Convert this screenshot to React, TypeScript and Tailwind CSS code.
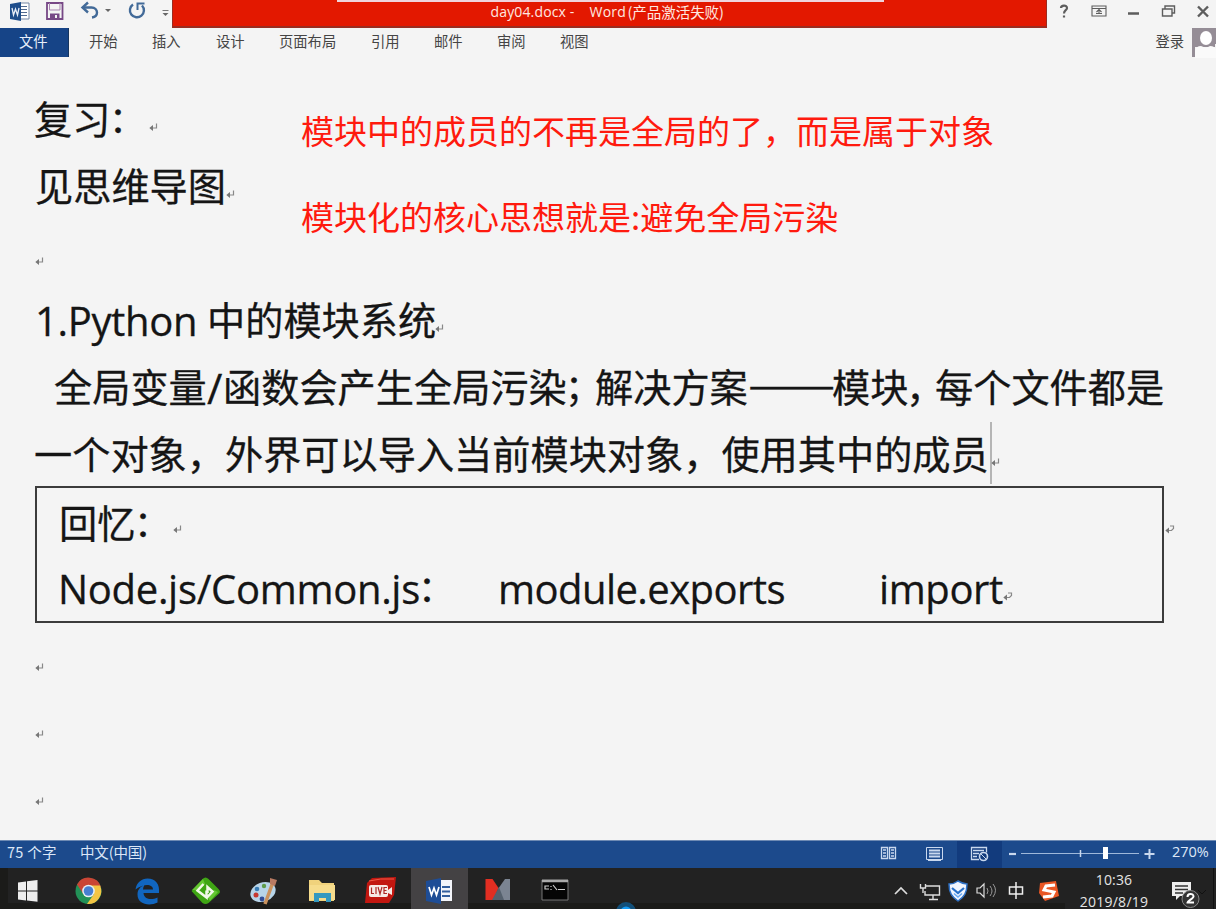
import React from "react";

const CJK = "font-['Open_Sans','Noto_Sans_CJK_SC',sans-serif]";
const UI = "font-['Noto_Sans_CJK_SC',sans-serif]";

function Seg({ w, className = "", children }: { w: string; className?: string; children?: React.ReactNode }) {
  return <span className={`block shrink-0 whitespace-pre ${w} ${className}`}>{children}</span>;
}

function Mark({ className = "" }: { className?: string }) {
  return (
    <svg className={`h-[9px] w-[9px] shrink-0 ${className}`} viewBox="0 0 9 9" fill="none" stroke="#888" strokeWidth="1.200">
      <path d="M7.500 .5v4.500H2" />
      <path d="M.3 5 4 2v6z" fill="#777" stroke="none" />
    </svg>
  );
}

function CellMark({ className = "" }: { className?: string }) {
  return (
    <svg className={`h-[9px] w-[10px] shrink-0 ${className}`} viewBox="0 0 10 9" fill="none" stroke="#888" strokeWidth="1.200">
      <path d="M5 1h3.500v2.500L6.500 5.500H3" />
      <path d="M.3 5.500 4 2.500v6z" fill="#777" stroke="none" />
    </svg>
  );
}

function Line({ className = "", children }: { className?: string; children?: React.ReactNode }) {
  return (
    <div className={`flex h-[67px] shrink-0 items-center text-[38.2px] leading-[67px] text-[#151515] [-webkit-text-stroke:0.3px_#151515] ${className}`}>{children}</div>
  );
}

function TitleBar() {
  return (
    <div className="flex h-[28px] shrink-0">
      <div className="flex w-[172px] shrink-0 items-start">
        <svg className="h-[28px] w-[172px]" viewBox="0 0 172 28" fill="none">
          <path d="M20 3h9v16h-9" fill="#fff" stroke="#7487a5" />
          <path d="M21 6.500h6M21 9.500h6M21 12.500h6M21 15.500h6" stroke="#50698f" />
          <path d="m10 4 11-2v19l-11-2z" fill="#1e4d8b" />
          <path d="m12 8 1.500 7 2-6 2 6 1.500-7" stroke="#e8eef8" strokeWidth="1.300" />
          <path d="M47 3h15.500v16H47z" stroke="#774886" strokeWidth="1.800" />
          <path d="M49.500 3v7h10.500V3" stroke="#a885b1" />
          <path d="M50 19v-5.500h9.500V19" fill="#774886" />
          <path d="M55 15h2v3h-2z" fill="#f4f4f4" />
          <path d="M83 7.500h8.500c3.500 0 5.500 2.500 5.500 5s-2 4.500-5 5" stroke="#426a98" strokeWidth="2.400" />
          <path d="m88 2.500-5.500 5 5.500 5" stroke="#426a98" strokeWidth="2.400" />
          <path d="M105 9h6l-3 3z" fill="#666" />
          <path d="M133 4.500A7 7 0 1 0 142 5.500" stroke="#426a98" strokeWidth="2.400" />
          <path d="M144.500 3.500H137.500v6.500" stroke="#426a98" strokeWidth="2" />
          <path d="M162.500 10.500h6" stroke="#777" />
          <path d="M162.500 13h6l-3 3z" fill="#666" />
        </svg>
      </div>
      <div className="relative flex w-[875px] shrink-0 justify-center border-x border-b-2 border-[#9b2c20] bg-[#e31800]">
        <div className="absolute left-[164px] top-0 h-[2px] w-[547px] bg-[#efd4dc]" />
        <div className="w-[872px] pl-[317px] leading-[24px] text-[#ffe8e0]">
          <div className="flex whitespace-pre">
            <Seg w="w-[99px]" className="font-['Open_Sans'] text-[14px] tracking-[0.150px]">day04.docx -</Seg>
            <Seg w="w-[39px]" className="font-['Open_Sans'] text-[14px] tracking-[0.200px]">Word</Seg>
            <Seg w="w-[100px]" className="-ml-px text-[14.500px] tracking-[-0.050px]">(产品激活失败)</Seg>
          </div>
        </div>
      </div>
      <svg className="h-[28px] w-[169px] shrink-0" viewBox="1047 0 169 28" fill="none" stroke="#5d5d5d" strokeWidth="1.400">
        <path d="M1061 8c0-3 6-3.500 6 0 0 2.500-3 2-3 5.500M1064 15.500v2" strokeWidth="2.200" />
        <path d="M1092 6h14v10h-14zM1092 8.500h14M1096 13.500h6M1099 10v4M1096.500 12l2.500-2.500 2.500 2.500" strokeWidth="1.100" />
        <path d="M1128 13.500h11" strokeWidth="2.500" />
        <path d="M1162.500 9h9.500v7h-9.500zM1165 9V6h9.500v7H1172" />
        <path d="m1198 6.500 10 10M1208 6.500l-10 10" strokeWidth="2.400" />
      </svg>
    </div>
  );
}

function Ribbon() {
  return (
    <div className="flex h-[30px] shrink-0 items-start text-[14.300px] leading-[25px] text-[#454545]">
      <div className="mr-[20px] h-[29px] w-[69px] shrink-0 border-r border-[#17365f] bg-[#164487] pl-[19px] leading-[26px] text-[#e9f0fb]">文件</div>
      <Seg w="w-[63px]">开始</Seg>
      <Seg w="w-[64px]">插入</Seg>
      <Seg w="w-[63px]">设计</Seg>
      <Seg w="w-[92px]">页面布局</Seg>
      <Seg w="w-[63px]">引用</Seg>
      <Seg w="w-[63px]">邮件</Seg>
      <Seg w="w-[63px]">审阅</Seg>
      <Seg w="w-[63px]">视图</Seg>
      <span className="ml-auto mr-[8px]">登录</span>
      <svg className="h-[30px] w-[24px] shrink-0" viewBox="0 0 24 30">
        <path d="M0 0h24v16h-1v3H3v10H0z" fill="#958d96" />
        <ellipse cx="14" cy="10" rx="6" ry="7" fill="#fff" />
        <path d="M3 30V23q1-5 6-5l5 2 4-2q5 0 6 4v8z" fill="#fafafa" />
      </svg>
    </div>
  );
}

function Document() {
  return (
    <div className={`relative flex h-[782px] shrink-0 flex-col pt-[28px] ${CJK}`}>
      <Line className="pl-[34px]">
        <Seg w="w-[76px]">复习</Seg>
        <Seg w="w-[39px]" className="-indent-[1px] text-[36px]">：</Seg>
        <Mark className="mt-[16px]" />
      </Line>
      <Line className="pl-[35px]">
        <Seg w="w-[191px]">见思维导图</Seg>
        <Mark className="mt-[16px]" />
      </Line>
      <Line className="pl-[35px]">
        <Mark className="mt-[16px]" />
      </Line>
      <Line className="pl-[35px]">
        <Seg w="w-[172px]" className="text-[40px] tracking-[-0.350px]">1.Python</Seg>
        <Seg w="w-[228px]">中的模块系统</Seg>
        <Mark className="mt-[16px]" />
      </Line>
      <Line className="pl-[54px]">
        <Seg w="w-[153px]">全局变量</Seg>
        <Seg w="w-[16px]" className="text-[42px]">/</Seg>
        <Seg w="w-[344px]">函数会产生全局污染</Seg>
        <Seg w="w-[28px]" className="-indent-[2px] text-[36px]">；</Seg>
        <Seg w="w-[153px]">解决方案</Seg>
        <Seg w="w-[84px]" className="-mt-[12px] origin-left scale-x-[1.240] font-['Noto_Sans_CJK_SC'] text-[42px]">——</Seg>
        <Seg w="w-[76px]">模块</Seg>
        <Seg w="w-[27px]" className="-indent-[2px]">，</Seg>
        <Seg w="w-[230px]">每个文件都是</Seg>
      </Line>
      <Line className="pl-[34px]">
        <Seg w="w-[956px]">一个对象，外界可以导入当前模块对象，使用其中的成员</Seg>
        <div className="-mt-[4px] h-[62px] w-[2px] shrink-0 bg-[#b5b5b5]" />
        <Mark className="-ml-px mt-[16px]" />
      </Line>
      <div className="-mt-[2px] flex shrink-0 items-start">
        <div className="ml-[35px] h-[137px] w-[1129px] shrink-0 border-2 border-[#3c3c3c]">
          <Line className="pl-[22px] pt-[4px]">
            <Seg w="w-[76px]">回忆</Seg>
            <Seg w="w-[38px]" className="-indent-[1px] text-[36px]">：</Seg>
            <Mark className="mt-[12px]" />
          </Line>
          <Line className="pl-[21px]">
            <Seg w="w-[361px]" className="text-[40px] tracking-[-0.300px]">Node.js/Common.js</Seg>
            <Seg w="w-[79px]" className="-indent-[1px] text-[36px]">：</Seg>
            <Seg w="w-[381px]" className="text-[40px] tracking-[-0.550px]">module.exports</Seg>
            <Seg w="w-[124px]" className="text-[40px] tracking-[-0.400px]">import</Seg>
            <CellMark className="mt-[16px]" />
          </Line>
        </div>
        <CellMark className="ml-px mt-[39px]" />
      </div>
      <Line className="mt-[3px] pl-[35px]"><Mark className="mt-[16px]" /></Line>
      <Line className="pl-[35px]"><Mark className="mt-[16px]" /></Line>
      <Line className="pl-[35px]"><Mark className="mt-[16px]" /></Line>
      <div className="absolute left-[301px] top-[47px] flex flex-col gap-[36px] whitespace-pre font-['Noto_Sans_CJK_SC',sans-serif] text-[33px] leading-[50px] text-[#ff1a0e]">
        <span>模块中的成员的不再是全局的了，而是属于对象</span>
        <span>模块化的核心思想就是:避免全局污染</span>
      </div>
    </div>
  );
}

function StatusBar() {
  return (
    <div className="flex h-[28px] shrink-0 border-t border-[#6e8ab3] bg-[#1c4a8c] text-[14.500px] leading-[22px] text-[#dce7f7]">
      <Seg w="w-[80px]" className="pl-[7px] tracking-[0.300px]">75 个字</Seg>
      <span className="tracking-[-0.150px]">中文(中国)</span>
      <svg className="ml-auto h-[27px] w-[296px] shrink-0" viewBox="870 841 296 27" fill="none" stroke="#c9d8ee">
        <path d="M957 841h45v27h-45z" fill="#123b7d" stroke="none" />
        <path d="M881.500 847.500h6v11h-6zM889.500 847.500h6v11h-6zM883 850h3M883 853h3M883 856h3M891 850h3M891 853h3M891 856h3" strokeWidth="1.300" />
        <path d="M926.500 847.500h16v12h-16zM928 860.500h13" />
        <path d="M929 850.500h11M929 853.500h11M929 856.500h11" strokeWidth="1.800" />
        <path d="M979 859.500h-7.500v-12h15v5M973 850.500h11M973 853.500h6M973 856.500h4" strokeWidth="1.300" />
        <circle cx="983.500" cy="856.500" r="4" strokeWidth="1.600" />
        <path d="m981 854 5 5" />
        <path d="M1009 854h7" strokeWidth="2.200" />
        <path d="M1021 853.500h118" stroke="#9fb8da" />
        <path d="M1080.500 850v7" strokeWidth="1.500" />
        <path d="M1103 847h5v12h-5z" fill="#fff" stroke="none" />
        <path d="M1144.500 854h10M1149.500 849v10" strokeWidth="2" />
      </svg>
      <Seg w="w-[50px]" className="pl-[6px] font-['Open_Sans'] text-[14.500px] tracking-[-0.050px]">270%</Seg>
    </div>
  );
}

function Taskbar() {
  return (
    <div className="flex h-[41px] shrink-0 overflow-hidden bg-[#222222]">
      <svg className="h-[41px] w-[1065px] shrink-0" viewBox="0 868 1065 41" fill="none">
        <path d="M0 868h8v41H0zM0 903h1065v6H0z" fill="#1b1b19" />
        <path d="m18 882.500 8-1v9h-8zM27 881.300l10.500-1.300v10.500H27zM18 891.500h8v9l-8-1zM27 891.500h10.500v10.200L27 900.500z" fill="#eee" />
        <circle cx="88.500" cy="891" r="13" fill="#229157" />
        <path d="M77 884.500A13 13 0 0 1 101 887l-12.500-1.500-5.500 8z" fill="#ca4535" />
        <path d="M88.500 885.500H100A13 13 0 0 1 87 904l7-10z" fill="#f4c544" />
        <circle cx="88.500" cy="891" r="6.300" fill="#e9eff2" />
        <circle cx="88.500" cy="891" r="4.800" fill="#477fd2" />
        <path d="M135.500 889.500c1-7 6-11 12-11 8 0 12.500 5.500 11.500 14.500h-15.500c.5 6.500 8 7.500 14 4.500v5c-8 4-20 2-20-8 0-5 3-8 7-9.500-1 1.500-1.500 3-1.500 4.500h10c0-6-10-6-17.500 0z" fill="#1166bf" />
        <path d="m191.500 891 11-12q3-3 6 0l10 10q3 3 0 5l-10 9q-3 2-6 0z" fill="#3fa514" />
        <path d="m192 890 11-11 2 5-5 6zM210 901l8-9-4-2-7 6z" fill="#65c733" />
        <path d="m203.500 884-6 6.500 9 7v-7M206.500 898l6-6.500-5-4.500v6" stroke="#f2f8e9" strokeWidth="2.500" />
        <ellipse cx="263" cy="892" rx="13" ry="9.500" fill="#b7d4e8" transform="rotate(-20 263 892)" />
        <circle cx="256" cy="895" r="2.500" fill="#c63830" />
        <circle cx="257" cy="889" r="2.300" fill="#397cb5" />
        <circle cx="264" cy="886" r="2.200" fill="#5e9c4a" />
        <circle cx="262" cy="899" r="2.400" fill="#324d97" />
        <path d="m273 882-8 22" stroke="#ca925e" strokeWidth="3.500" />
        <path d="m270 878 7 2-2 6-5-2z" fill="#b87a62" />
        <path d="M309 880h10l3 3h12v18h-25z" fill="#f0d27c" />
        <path d="M309 885h26v15h-26z" fill="#f6dc8c" />
        <path d="M314 902v-9h17v9h-5v-4h-7v4z" fill="#3599c0" />
        <path d="m372 878 24-1-2 18-5 8h-24l2-20z" fill="#c21710" />
        <path d="M369 881q11-3 25-2" stroke="#f05745" />
        <rect x="369" y="885" width="19" height="12" rx="2" fill="#f6e9e5" />
        <path d="m388 890 4-3v8l-4-2z" fill="#f6e9e5" />
        <path d="M371.500 887.500v6h2.500M376 887v7M378 887l2 7 2-7M387 887.500h-3v6h3M384 890.500h2.500" stroke="#ac2824" strokeWidth="1.200" />
        <path d="M411 868h57v41h-57z" fill="#444244" />
        <path d="M440 880h12v21h-12z" fill="#f3f5fa" />
        <path d="M442 887h8M442 891.500h8M442 896h8" stroke="#335e9c" strokeWidth="2" />
        <path d="m426 881 15-3v26l-15-3z" fill="#1e4d96" />
        <path d="m429 887 2.500 8 2.500-7 2.500 7 2.500-8" stroke="#fff" strokeWidth="1.700" />
        <path d="M485.500 879h7l6 9-5 12h-8z" fill="#e22e22" />
        <path d="M510 879h-5l-7 10 4 11h8z" fill="#7b8492" />
        <path d="m499 887 5 13h-12z" fill="#55606d" />
        <path d="M542 880h26v20h-26z" fill="#050505" stroke="#777" />
        <path d="M542 881h26" stroke="#aaa" strokeWidth="2.500" />
        <path d="M549 886h-4v3h4M551 886v1M551 889v1M553 885l4 5M558 889.500h7" stroke="#ccc" strokeWidth="1.200" />
        <circle cx="626" cy="912" r="10" fill="#124f79" />
        <circle cx="626" cy="912" r="5.500" fill="#159bf4" />
        <path d="m895 894 6-6 6 6" stroke="#ddd" strokeWidth="1.700" />
        <path d="M926 886h13.500v9H925v-4M929 899.500h9M933 895v4M920.500 884v4h5v-4M923 888v5" stroke="#ddd" strokeWidth="1.400" />
        <path d="M958 881q5 3 9 3c0 9-3 13-9 17-6-4-9-8-9-17q5 0 9-3z" fill="#f1f6ff" stroke="#2e70c4" strokeWidth="1.500" />
        <path d="m952 888 6 5 6-5" stroke="#2871ca" strokeWidth="2.200" />
        <path d="m954 893.500 4 3.500 4-3.500" stroke="#69a9f3" strokeWidth="1.500" />
        <path d="M977 888h3l4-4v13l-4-4h-3z" stroke="#ddd" strokeWidth="1.200" />
        <path d="M987 888q2 3 0 6M990 886q4 5 0 10M993 884q5 6 0 13" stroke="#999" />
        <path d="M1009.500 887h13v7h-13zM1016 882v17" stroke="#eee" strokeWidth="1.500" />
        <path d="m1040 883 16-2 3 15-14 5-6-8z" fill="#e95725" />
        <path d="m1055 885-9 1-2 4 10 2-2 4-9 1" stroke="#fff" strokeWidth="3" />
      </svg>
      <div className="flex w-[98px] shrink-0 flex-col items-center pt-px font-['Open_Sans'] text-[14px] leading-[22px] text-[#e5e5e5]">
        <span className="tracking-[0.150px]">10:36</span>
        <span className="tracking-[0.250px]">2019/8/19</span>
      </div>
      <svg className="h-[41px] w-[53px] shrink-0" viewBox="1163 868 53 41" fill="none">
        <path d="M1172 882h19v14h-11l-4 4v-4h-4z" fill="#eee" />
        <path d="M1175 886h13M1175 889.500h13M1175 893h8" stroke="#333" strokeWidth="1.300" />
        <circle cx="1190.500" cy="899" r="8.500" fill="#333" stroke="#888" />
        <path d="M1187.500 897c0-4 6-4 6-.5 0 2-6 4.500-6 6h6.500" stroke="#fff" strokeWidth="2" />
        <path d="m1198 890 4 4 4-4M1213.500 868v41" stroke="#111" />
      </svg>
    </div>
  );
}

export default function App() {
  return (
    <div className={`flex h-[909px] w-[1216px] flex-col overflow-hidden bg-[#f4f4f4] ${UI}`}>
      <TitleBar />
      <Ribbon />
      <Document />
      <StatusBar />
      <Taskbar />
    </div>
  );
}
